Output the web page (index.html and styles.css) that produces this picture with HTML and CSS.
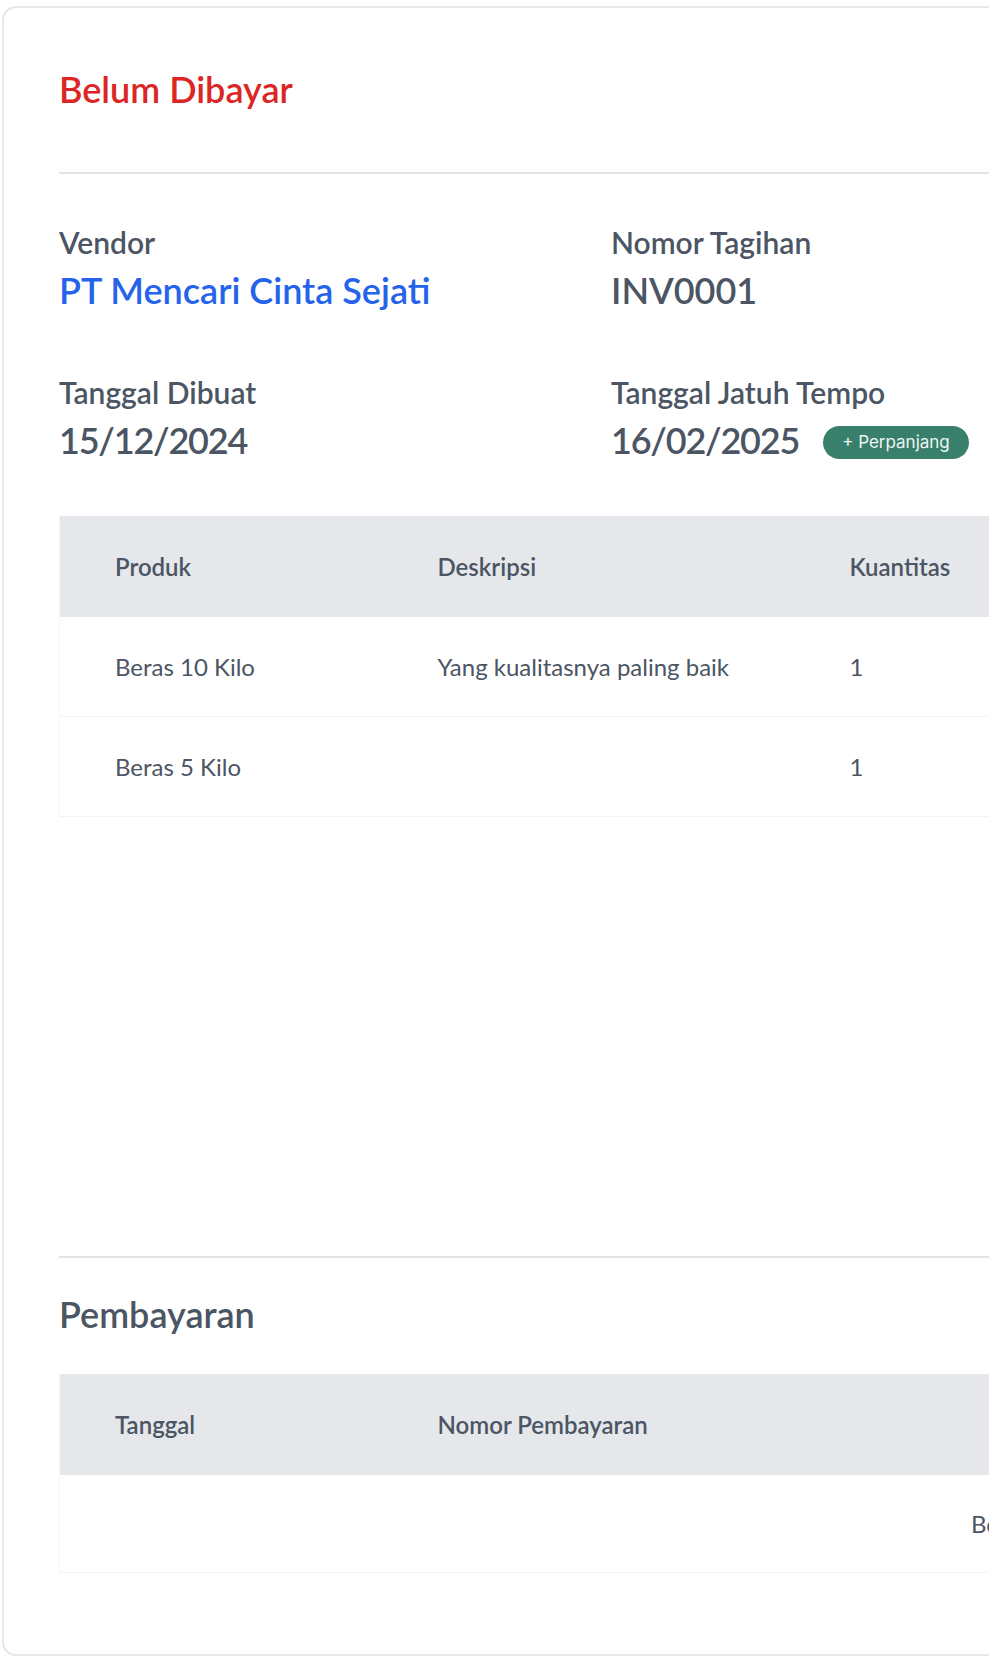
FILE: index.html
```html
<!DOCTYPE html>
<html lang="id">
<head>
<meta charset="utf-8">
<title>Tagihan INV0001</title>
<link rel="stylesheet" href="styles.css">
</head>
<body>
<div class="card">
  <h1 class="status">Belum Dibayar</h1>
  <hr class="divider">

  <div class="info-grid">
    <div class="field">
      <div class="label">Vendor</div>
      <div class="value link">PT Mencari Cinta Sejati</div>
    </div>
    <div class="field">
      <div class="label">Nomor Tagihan</div>
      <div class="value">INV0001</div>
    </div>
    <div class="field">
      <div class="label">Tanggal Dibuat</div>
      <div class="value date">15/12/2024</div>
    </div>
    <div class="field">
      <div class="label">Tanggal Jatuh Tempo</div>
      <div class="value-row">
        <span class="value date">16/02/2025</span>
        <button class="badge">+ Perpanjang</button>
      </div>
    </div>
  </div>

  <table class="table items">
    <colgroup>
      <col class="col-a">
      <col class="col-b">
      <col>
    </colgroup>
    <thead>
      <tr><th>Produk</th><th>Deskripsi</th><th>Kuantitas</th></tr>
    </thead>
    <tbody>
      <tr><td>Beras 10 Kilo</td><td>Yang kualitasnya paling baik</td><td>1</td></tr>
      <tr><td>Beras 5 Kilo</td><td></td><td>1</td></tr>
    </tbody>
  </table>

  <hr class="divider section-divider">

  <h2 class="section-title">Pembayaran</h2>

  <table class="table payments">
    <colgroup>
      <col class="col-a">
      <col>
    </colgroup>
    <thead>
      <tr><th>Tanggal</th><th>Nomor Pembayaran</th></tr>
    </thead>
    <tbody>
      <tr><td class="empty" colspan="2">Belum ada pembayaran</td></tr>
    </tbody>
  </table>
</div>
</body>
</html>
```

FILE: styles.css
```css
html, body {
  margin: 0;
  padding: 0;
  background: #ffffff;
  overflow: hidden;
}

body {
  font-family: Lato, "Noto Sans", sans-serif;
  color: #4b5563;
}

.card {
  box-sizing: border-box;
  width: 2182px;
  margin: 6px 0 0 2px;
  border: 2px solid #e5e7eb;
  border-radius: 14px;
  padding: 61px 55px 81px;
  background: #ffffff;
}

.status {
  margin: 0;
  font-size: 36px;
  line-height: 40px;
  font-weight: 600;
  color: #dc2626;
}

.divider {
  border: 0;
  height: 2px;
  margin: 63px 0 0;
  background: #e1e4e8;
}

.info-grid {
  margin-top: 50px;
  display: grid;
  grid-template-columns: 552px 552px;
  row-gap: 62px;
}

.label {
  font-size: 30px;
  line-height: 36px;
  font-weight: 600;
  color: #4b5563;
}

.value {
  display: block;
  margin-top: 8px;
  font-size: 36px;
  line-height: 44px;
  font-weight: 600;
  color: #4b5563;
}

.value.link {
  color: #2563eb;
}

.value.date {
  letter-spacing: -1.2px;
}

.value-row {
  display: flex;
  align-items: center;
  gap: 24px;
  margin-top: 8px;
}

.value-row .value {
  margin-top: 0;
}

.badge {
  display: inline-flex;
  align-items: center;
  height: 33px;
  padding: 0 19px;
  margin-top: 4px;
  border: 0;
  border-radius: 999px;
  background: #38806b;
  color: #eef6f3;
  font-family: Inter, "Noto Sans", sans-serif;
  font-size: 17px;
  font-weight: 400;
}

.table {
  width: 100%;
  border-collapse: collapse;
  table-layout: fixed;
  border-left: 1px solid #f3f4f6;
}

.table .col-a { width: 323px; }
.table .col-b { width: 412px; }

.table th {
  height: 101px;
  padding: 0 55px;
  background: #e5e7eb;
  text-align: left;
  font-size: 24px;
  font-weight: 600;
  color: #4b5563;
  vertical-align: middle;
}

.table td {
  height: 99px;
  padding: 0 55px;
  border-bottom: 1px solid #f3f4f6;
  font-size: 24px;
  font-weight: 400;
  color: #4b5563;
  vertical-align: middle;
}

.items {
  margin-top: 54px;
}

.section-divider {
  margin-top: 439px;
}

.section-title {
  margin: 36px 0 0;
  font-size: 36px;
  line-height: 40px;
  font-weight: 600;
  color: #4b5563;
}

.payments {
  margin-top: 40px;
}

.payments td.empty {
  height: 97px;
  text-align: center;
}
```
